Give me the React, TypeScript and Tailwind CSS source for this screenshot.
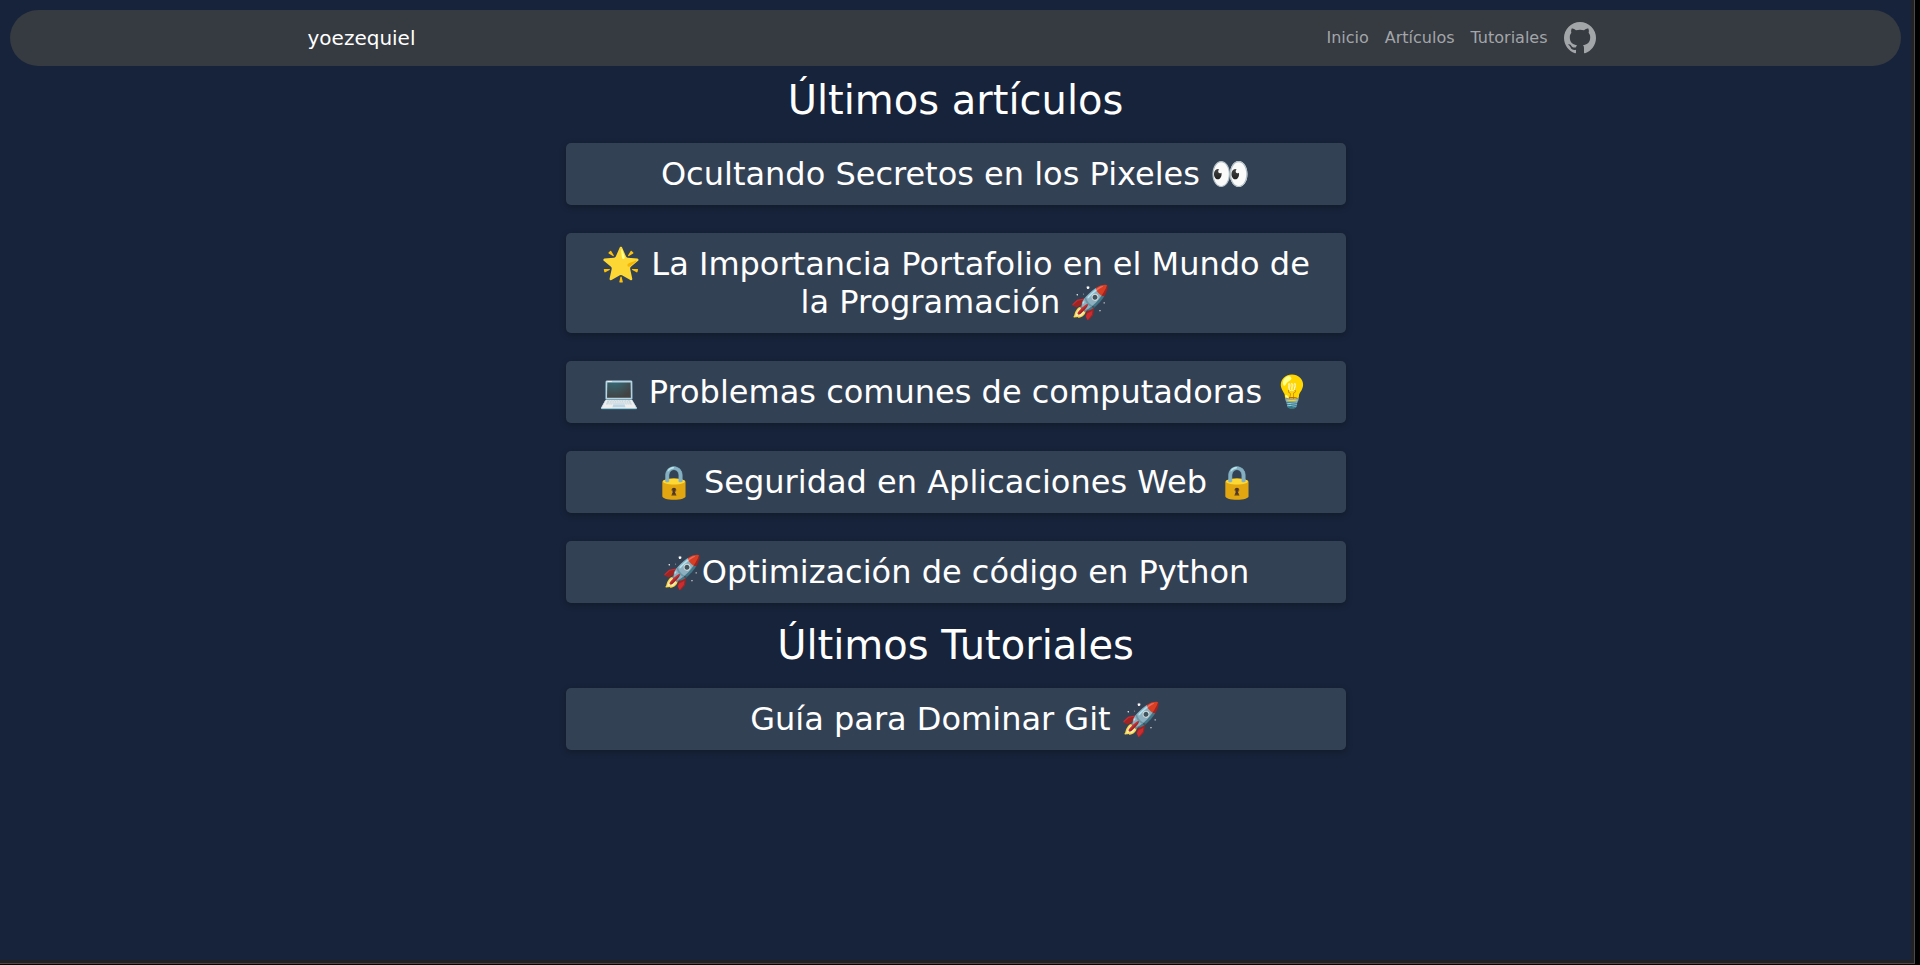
import React from "react";

const articles = [
  "Ocultando Secretos en los Pixeles 👀",
  "🌟 La Importancia Portafolio en el Mundo de la Programación 🚀",
  "💻 Problemas comunes de computadoras 💡",
  "🔒 Seguridad en Aplicaciones Web 🔒",
  "🚀Optimización de código en Python",
];

const tutorials = ["Guía para Dominar Git 🚀"];

function PostList({ title, posts }: { title: string; posts: string[] }) {
  return (
    <section>
      <h1 className="mb-[19px] text-center text-[40px] leading-[48px]">{title}</h1>
      <ul className="mx-auto flex max-w-[780px] flex-col gap-7">
        {posts.map((post) => (
          <li key={post}>
            <a
              href="#"
              className="block rounded-[5px] bg-[#334155] px-6 py-3 text-center text-[32px] leading-[38px] shadow-[0_2px_6px_rgba(0,0,0,0.25)]"
            >
              <h2>{post}</h2>
            </a>
          </li>
        ))}
      </ul>
    </section>
  );
}

function GithubIcon() {
  return (
    <svg viewBox="2 2 20 20" className="size-8" fill="currentColor" aria-hidden="true">
      <path d="M12 2A10 10 0 0 0 2 12C2 16.42 4.87 20.17 8.84 21.5C9.34 21.58 9.5 21.27 9.5 21V19.31C6.73 19.91 6.14 17.97 6.14 17.97C5.68 16.81 5.03 16.5 5.03 16.5C4.12 15.88 5.1 15.9 5.1 15.9C6.1 15.97 6.63 16.93 6.63 16.93C7.5 18.45 8.97 18 9.54 17.76C9.63 17.11 9.89 16.67 10.17 16.42C7.95 16.17 5.62 15.31 5.62 11.5C5.62 10.39 6 9.5 6.65 8.79C6.55 8.54 6.2 7.5 6.75 6.15C6.75 6.15 7.59 5.88 9.5 7.17C10.29 6.95 11.15 6.84 12 6.84C12.85 6.84 13.71 6.95 14.5 7.17C16.41 5.88 17.25 6.15 17.25 6.15C17.8 7.5 17.45 8.54 17.35 8.79C18 9.5 18.38 10.39 18.38 11.5C18.38 15.32 16.04 16.16 13.81 16.41C14.17 16.72 14.5 17.33 14.5 18.26V21C14.5 21.27 14.66 21.59 15.17 21.5C19.14 20.16 22 16.42 22 12A10 10 0 0 0 12 2Z" />
    </svg>
  );
}

export default function App() {
  return (
    <div className="flex min-h-screen flex-col bg-black font-['DejaVu_Sans',sans-serif] text-white">
      <div className="mr-[5px] mb-px flex grow flex-col border-r border-b border-[#4a4a4c] bg-[#222224] pr-[3px] pb-[3px]">
        <div className="grow bg-[#17233a] p-[10px]">
          <nav className="rounded-full bg-[#363a41]">
            <div className="mx-auto flex h-14 max-w-[1320px] items-center justify-between px-3">
              <a href="#" className="text-xl leading-[30px]">
                yoezequiel
              </a>
              <div className="flex items-center gap-4 pr-2 text-base leading-6 text-[#a3a6a9]">
                <a href="#">Inicio</a>
                <a href="#">Artículos</a>
                <a href="#">Tutoriales</a>
                <a href="#" aria-label="GitHub">
                  <GithubIcon />
                </a>
              </div>
            </div>
          </nav>
          <main className="mt-[10px] flex flex-col gap-[18px]">
            <PostList title="Últimos artículos" posts={articles} />
            <PostList title="Últimos Tutoriales" posts={tutorials} />
          </main>
        </div>
      </div>
    </div>
  );
}
